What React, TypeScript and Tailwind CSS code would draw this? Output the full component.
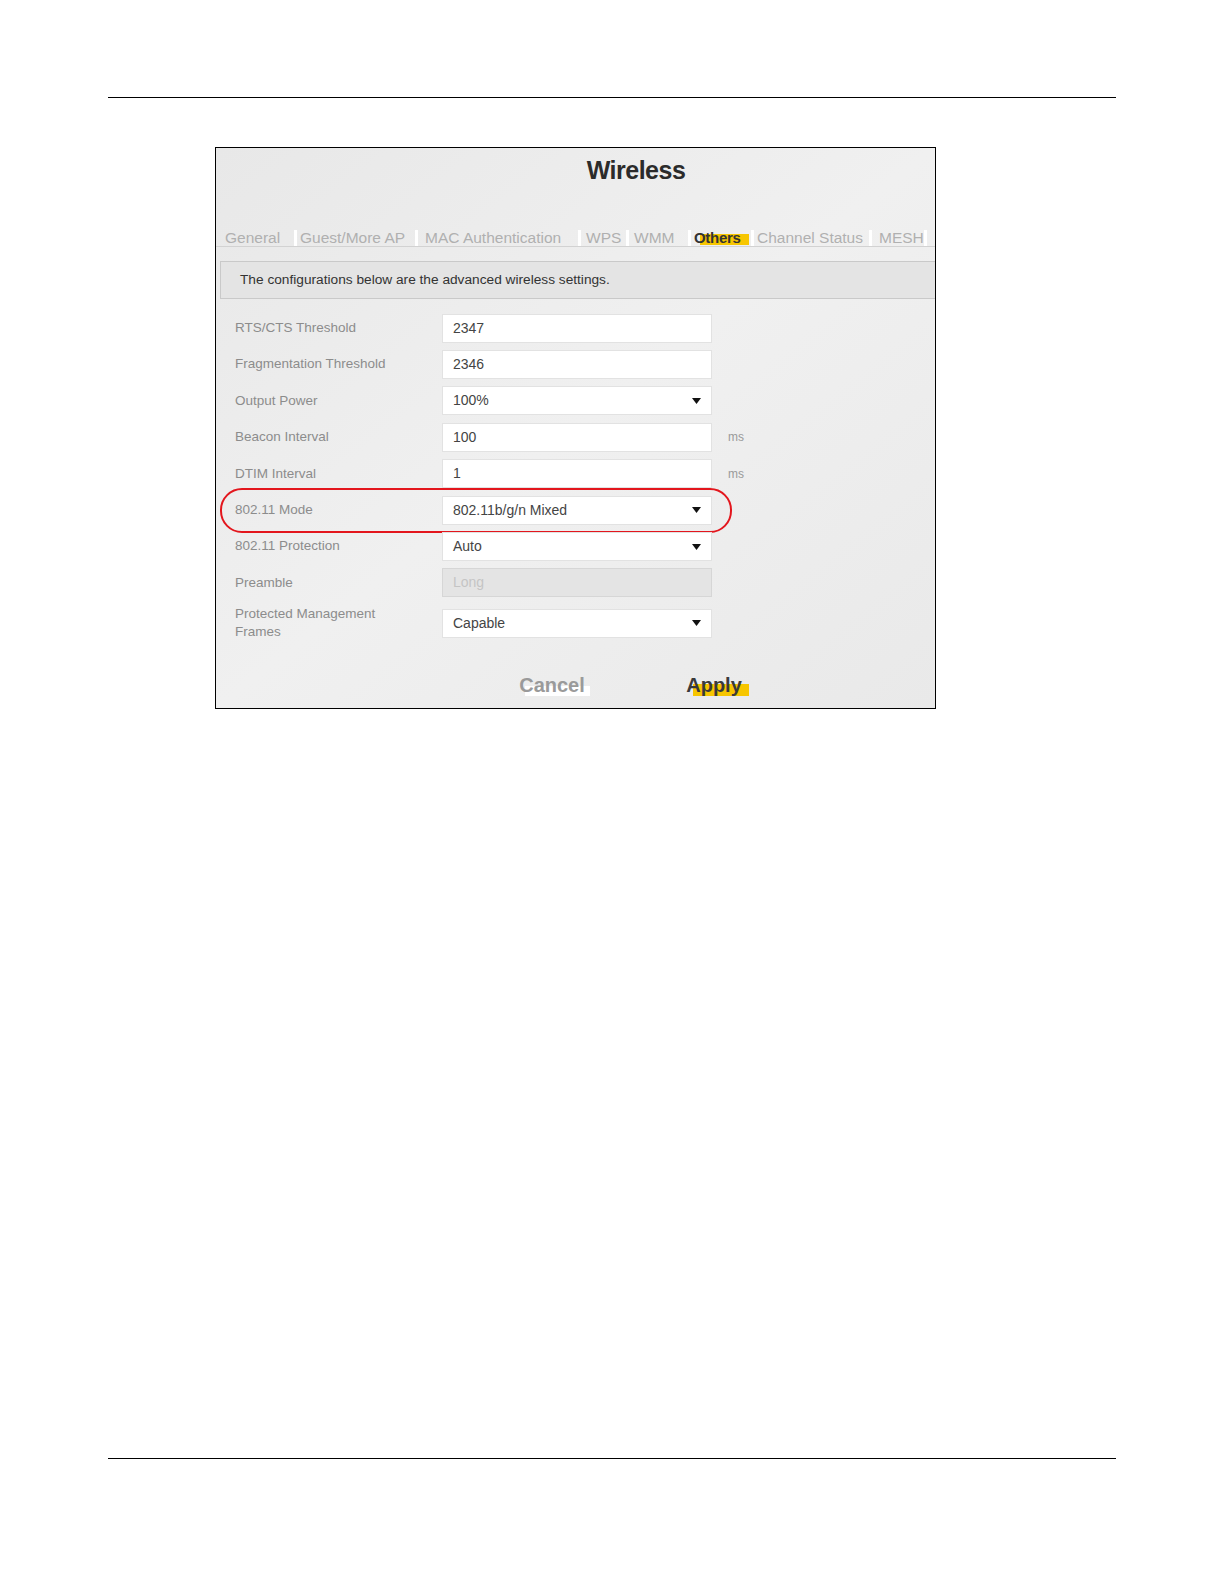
import React from "react";

const font = { fontFamily: '"Liberation Sans", Arial, sans-serif' };

function Arrow() {
  return (
    <svg width="9" height="6" viewBox="0 0 9 6" className="shrink-0">
      <path d="M0 0 H9 L4.5 6 Z" fill="#111" />
    </svg>
  );
}

function Field({
  value,
  select,
  disabled,
}: {
  value: string;
  select?: boolean;
  disabled?: boolean;
}) {
  return (
    <div
      className={
        "w-[270px] h-[29px] flex items-center justify-between pl-[10px] pr-[10px] text-[14px] border " +
        (disabled
          ? "bg-[#e4e4e4] border-[#d6d6d6] text-[#c4c4c4]"
          : "bg-white border-[#e2e2e2] text-[#444]")
      }
    >
      <span>{value}</span>
      {select ? <Arrow /> : null}
    </div>
  );
}

function Row({
  label,
  value,
  select,
  disabled,
  unit,
  highlight,
}: {
  label: string;
  value: string;
  select?: boolean;
  disabled?: boolean;
  unit?: string;
  highlight?: boolean;
}) {
  return (
    <div className="relative flex items-center h-[36.4px]">
      <div className="w-[226px] pl-[19px] text-[13.5px] text-[#8c8c8c]">{label}</div>
      <Field value={value} select={select} disabled={disabled} />
      {unit ? <span className="ml-[16px] text-[12px] text-[#9a9a9a]">{unit}</span> : null}
      {highlight ? (
        <div className="absolute left-[4px] w-[512px] top-[-4px] h-[45px] border-2 border-[#e3161d] rounded-[22px] pointer-events-none" />
      ) : null}
    </div>
  );
}

const tabs: { label: string; w: number; pl: number; active?: boolean }[] = [
  { label: "General", w: 78, pl: 9 },
  { label: "Guest/More AP", w: 118, pl: 3 },
  { label: "MAC Authentication", w: 160, pl: 7 },
  { label: "WPS", w: 45, pl: 5 },
  { label: "WMM", w: 59, pl: 5 },
  { label: "Others", w: 60, pl: 3, active: true },
  { label: "Channel Status", w: 115, pl: 3 },
  { label: "MESH", w: 52, pl: 7 },
];

export default function App() {
  return (
    <div className="w-[1224px] h-[1584px] bg-white relative" style={font}>
      <div className="pt-[97px] pl-[108px]">
        <div className="w-[1008px] h-px bg-black" />
      </div>

      {/* screenshot box */}
      <div className="ml-[215px] mt-[49px] w-[721px] h-[562px] border border-black bg-linear-to-br from-[#e8e8e8] via-[#f0f0f0] to-[#e9e9e9]">
        <div className="pt-[2px] pl-[121px] h-[42px] text-center text-[25px] leading-[40px] font-bold tracking-[-0.5px] text-[#2b2b2b]">
          Wireless
        </div>

        {/* tabs */}
        <div className="mt-[40px] flex h-[17px] border-b border-[#d2d2d2]">
          {tabs.map((t) => (
            <React.Fragment key={t.label}>
              <div
                className="relative h-[16px] flex items-center shrink-0"
                style={{ width: t.w, paddingLeft: t.pl }}
              >
                {t.active ? (
                  <span className="absolute left-[9px] top-[4px] w-[49px] h-[11px] bg-[#f7c600]" />
                ) : null}
                <span
                  className={
                    "relative leading-[16px] whitespace-nowrap " +
                    (t.active
                      ? "text-[15px] font-bold text-[#333] tracking-[-0.3px]"
                      : "text-[15.5px] text-[#b0b0b0]")
                  }
                >
                  {t.label}
                </span>
              </div>
              <div className="w-[3px] h-[16px] bg-white shrink-0" />
            </React.Fragment>
          ))}
        </div>

        {/* info bar */}
        <div className="mt-[14px] ml-[4px] h-[38px] flex items-center pl-[19px] bg-[#e4e4e4] border-y border-l border-[#c9c9c9] text-[13.7px] text-[#333]">
          The configurations below are the advanced wireless settings.
        </div>

        {/* form */}
        <div className="mt-[11px] flex flex-col">
          <Row label="RTS/CTS Threshold" value="2347" />
          <Row label="Fragmentation Threshold" value="2346" />
          <Row label="Output Power" value="100%" select />
          <Row label="Beacon Interval" value="100" unit="ms" />
          <Row label="DTIM Interval" value="1" unit="ms" />
          <Row label="802.11 Mode" value="802.11b/g/n Mixed" select highlight />
          <Row label="802.11 Protection" value="Auto" select />
          <Row label="Preamble" value="Long" disabled />
          <div className="flex items-center h-[44px]">
            <div className="w-[226px] pl-[19px] text-[13.5px] leading-[18px] text-[#8c8c8c]">
              Protected Management
              <br />
              Frames
            </div>
            <Field value="Capable" select />
          </div>
        </div>

        {/* buttons */}
        <div className="mt-[25px] flex h-[30px] pl-[296px]">
          <div className="w-[80px] flex items-center justify-center">
            <span className="relative text-[20px] font-bold text-[#9a9a9a]">
              <span className="absolute left-[6px] right-[-5px] top-[16px] h-[10px] bg-white" />
              <span className="relative">Cancel</span>
            </span>
          </div>
          <div className="w-[82px]" />
          <div className="w-[80px] flex items-center justify-center">
            <span className="relative text-[20px] font-bold text-[#3a3a3a]">
              <span className="absolute left-[7px] right-[-7px] top-[14px] h-[12px] bg-[#f7c600]" />
              <span className="relative">Apply</span>
            </span>
          </div>
        </div>
      </div>

      <div className="mt-[749px] pl-[108px]">
        <div className="w-[1008px] h-px bg-black" />
      </div>
    </div>
  );
}
